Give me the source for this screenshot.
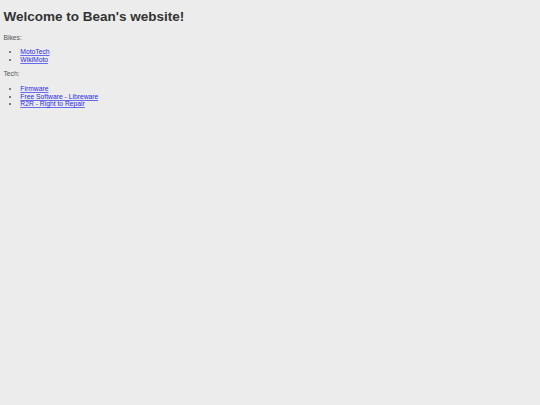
import React from 'react';

const bikes = [
    { label: 'MotoTech', href: '#' },
    { label: 'WikiMoto', href: '#' },
];

const tech = [
    { label: 'Firmware', href: '#' },
    { label: 'Free Software - Libreware', href: '#' },
    { label: 'R2R - Right to Repair', href: '#' },
];

const LinkList: React.FC<{ items: { label: string; href: string }[] }> = ({ items }) => (
    <ul className="list-disc my-[6.75px] pl-[16.9px] marker:text-[#555555]">
        {items.map((item) => (
            <li key={item.label}>
                <a href={item.href} className="text-[#2a2ae8] underline decoration-[#6a6aee] decoration-[0.5px] underline-offset-[1px]">
                    {item.label}
                </a>
            </li>
        ))}
    </ul>
);

export default function App() {
    return (
        <div className="min-h-[405px] bg-[#ececec] text-[#333333] text-[6.75px] leading-[1.15] px-[3.4px] py-[0.1px] font-['Liberation_Sans',Arial,sans-serif]">
            <h1 className="text-[13.5px] font-bold leading-[1.15] my-[9px]">Welcome to Bean's website!</h1>
            <p className="my-[6.75px] text-[#555555]">Bikes:</p>
            <LinkList items={bikes} />
            <p className="my-[6.75px] text-[#555555]">Tech:</p>
            <LinkList items={tech} />
        </div>
    );
}
